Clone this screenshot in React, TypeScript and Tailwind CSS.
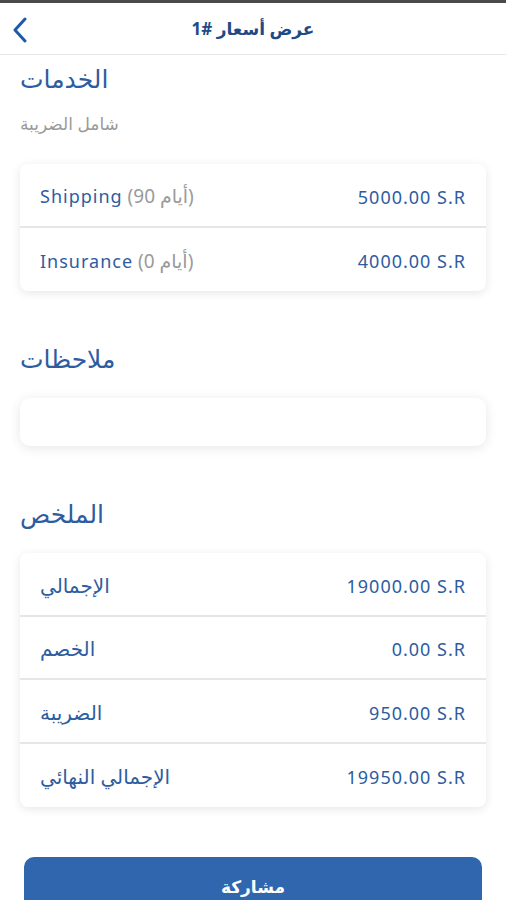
import React from "react";

const font = { fontFamily: '"Noto Sans", "DejaVu Sans", sans-serif' };

function Row({ label, extra, value, last, arabic }: { label: string; extra?: string; value: string; last?: boolean; arabic?: boolean }) {
  return (
    <div className={`flex items-center justify-between h-[63.5px] px-5 pt-[4px] ${last ? "" : "border-b-2 border-[#e6e6e6]"}`}>
      <div className={`text-[#2d5d9f] leading-none ${arabic ? "text-[20px]" : "text-[18px] tracking-[1px]"}`}>
        {label}
        {extra && <span className="text-[#9a9a9a] text-[19px] tracking-normal"> {extra}</span>}
      </div>
      <div className="text-[18px] text-[#2d5d9f] leading-none tracking-[1px]">{value}</div>
    </div>
  );
}

export default function App() {
  return (
    <div className="w-[506px] h-[900px] bg-white overflow-hidden relative" style={font}>
      <div className="h-[3px] bg-[#4a4a4a]" />
      <div className="h-[52px] flex items-center justify-center relative border-b border-[#e8e8e8]">
        <svg className="absolute left-[11px] top-[14px]" width="18" height="26" viewBox="0 0 18 26" fill="none">
          <path d="M14 2 L4 13 L14 24" stroke="#1f5aa6" strokeWidth="3" strokeLinecap="round" strokeLinejoin="round" />
        </svg>
        <div className="text-[17px] font-bold text-[#1f4a85]" dir="rtl">عرض أسعار #1</div>
      </div>

      <div className="px-5">
        <div className="mt-[7px] text-[25px] text-[#2d5d9f] leading-[32px]">الخدمات</div>
        <div className="mt-[19px] text-[17px] text-[#9a9a9a] leading-[22px]">شامل الضريبة</div>

        <div className="mt-[29px] bg-white rounded-[8px] shadow-[0_2px_10px_rgba(0,0,0,0.10)]">
          <Row label="Shipping" extra="(90 أيام)" value="5000.00 S.R" />
          <Row label="Insurance" extra="(0 أيام)" value="4000.00 S.R" last />
        </div>

        <div className="mt-[51px] text-[25px] text-[#2d5d9f] leading-[32px]">ملاحظات</div>
        <div className="mt-[24px] h-[48px] bg-white rounded-[10px] shadow-[0_2px_12px_rgba(0,0,0,0.10)]" />

        <div className="mt-[51px] text-[25px] text-[#2d5d9f] leading-[32px]">الملخص</div>
        <div className="mt-[24px] bg-white rounded-[8px] shadow-[0_2px_10px_rgba(0,0,0,0.10)]">
          <Row arabic label="الإجمالي" value="19000.00 S.R" />
          <Row arabic label="الخصم" value="0.00 S.R" />
          <Row arabic label="الضريبة" value="950.00 S.R" />
          <Row arabic label="الإجمالي النهائي" value="19950.00 S.R" last />
        </div>
      </div>

      <div className="px-6 mt-[50px]">
        <div className="h-[60px] rounded-[10px] bg-[#2f66ad] flex items-start justify-center pt-[17px]">
          <span className="text-white font-bold text-[17px]">مشاركة</span>
        </div>
      </div>
    </div>
  );
}
